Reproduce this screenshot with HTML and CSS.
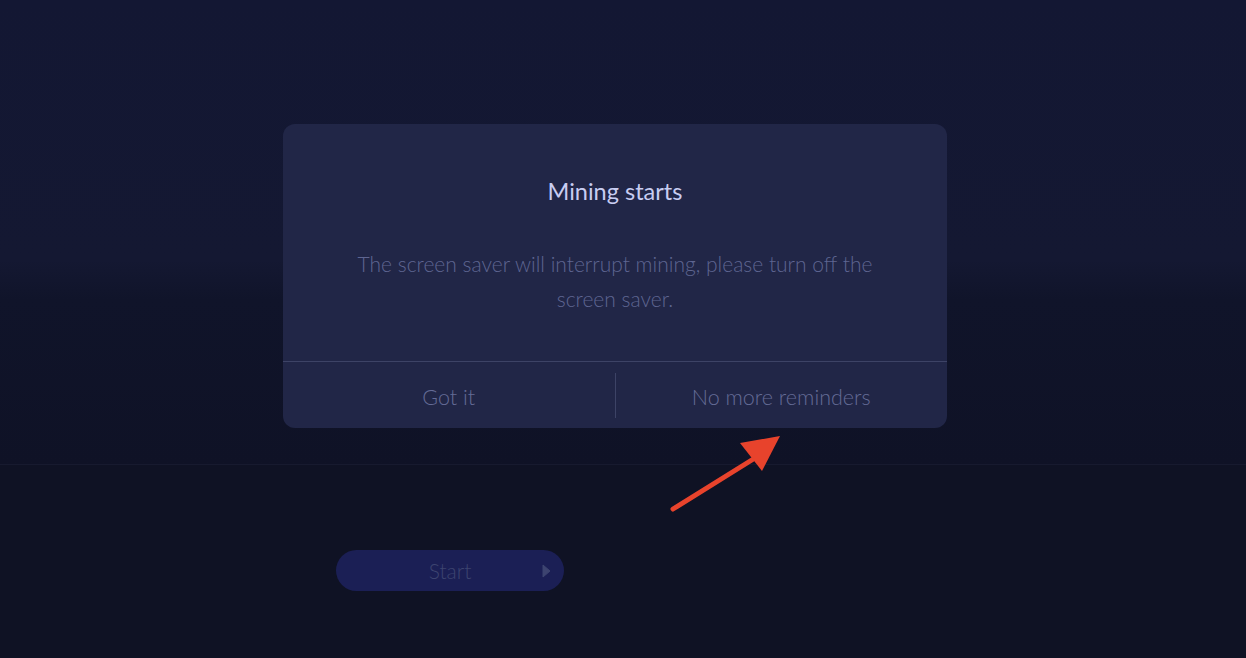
FILE: index.html
```html
<!DOCTYPE html>
<html lang="en">
<head>
<meta charset="utf-8">
<title>Mining starts</title>
<link rel="stylesheet" href="styles.css">
</head>
<body>
<div class="page">
  <section class="top"></section>
  <section class="bottom">
    <button class="start-btn">
      <span class="start-label">Start</span>
      <svg class="start-icon" width="9" height="14" viewBox="0 0 9 14"><path d="M1 1 L8 7 L1 13 Z" fill="#3d4470" stroke="#3d4470" stroke-width="1" stroke-linejoin="round"/></svg>
    </button>
  </section>

  <div class="dialog">
    <div class="dialog-body">
      <h2 class="dialog-title">Mining starts</h2>
      <p class="dialog-text">The screen saver will interrupt mining, please turn off the screen saver.</p>
    </div>
    <div class="dialog-actions">
      <div class="action">Got it</div>
      <div class="action-sep"></div>
      <div class="action">No more reminders</div>
    </div>
  </div>

  <svg class="arrow" width="130" height="90" viewBox="0 0 130 90">
    <line x1="13" y1="78" x2="95" y2="27" stroke="#e8432c" stroke-width="5" stroke-linecap="round"/>
    <path d="M80 12 L120 5 L102 40 Z" fill="#e8432c"/>
  </svg>
</div>
</body>
</html>
```
FILE: styles.css
```css
* { box-sizing: border-box; }
html, body { margin: 0; padding: 0; }
body {
  background: #0f1224;
  font-family: "Lato", "Open Sans", sans-serif;
  width: 1246px;
  height: 658px;
  overflow: hidden;
}
.page {
  position: relative;
  width: 1246px;
  height: 658px;
  display: flex;
  flex-direction: column;
}
.top {
  height: 465px;
  border-bottom: 1px solid #171a2f;
  background: linear-gradient(to bottom, #131733 0px, #141832 260px, #10142a 300px, #0f1226 465px);
}
.bottom {
  flex: 1;
  padding: 85px 0 0 336px;
}
.start-btn {
  width: 228px;
  height: 41px;
  border: 0;
  border-radius: 21px;
  background: #1b1f55;
  display: flex;
  align-items: center;
  justify-content: center;
  position: relative;
  font-family: inherit;
  padding: 0;
}
.start-label {
  color: #3d4470;
  font-size: 21px;
  font-weight: 300;
}
.start-icon {
  position: absolute;
  right: 13px;
  top: 14px;
}
.dialog {
  position: absolute;
  left: 283px;
  top: 124px;
  width: 664px;
  height: 304px;
  background: #212647;
  border-radius: 12px;
  display: flex;
  flex-direction: column;
}
.dialog-body {
  height: 238px;
  border-bottom: 1px solid #3d4366;
  padding: 50px 60px 0;
  text-align: center;
}
.dialog-title {
  margin: 0;
  font-size: 23.5px;
  font-weight: 400;
  color: #c8cdf2;
  line-height: 34px;
}
.dialog-text {
  margin: 38px 0 0;
  font-size: 21px;
  font-weight: 300;
  line-height: 35px;
  color: #5e6591;
}
.dialog-actions {
  flex: 1;
  display: flex;
  align-items: center;
}
.action {
  flex: 1;
  text-align: center;
  font-size: 21.5px;
  font-weight: 300;
  color: #646b96;
  padding-top: 4px;
}
.action-sep {
  width: 1px;
  height: 45px;
  background: #3d4366;
}
.arrow {
  position: absolute;
  left: 660px;
  top: 431px;
}
```
